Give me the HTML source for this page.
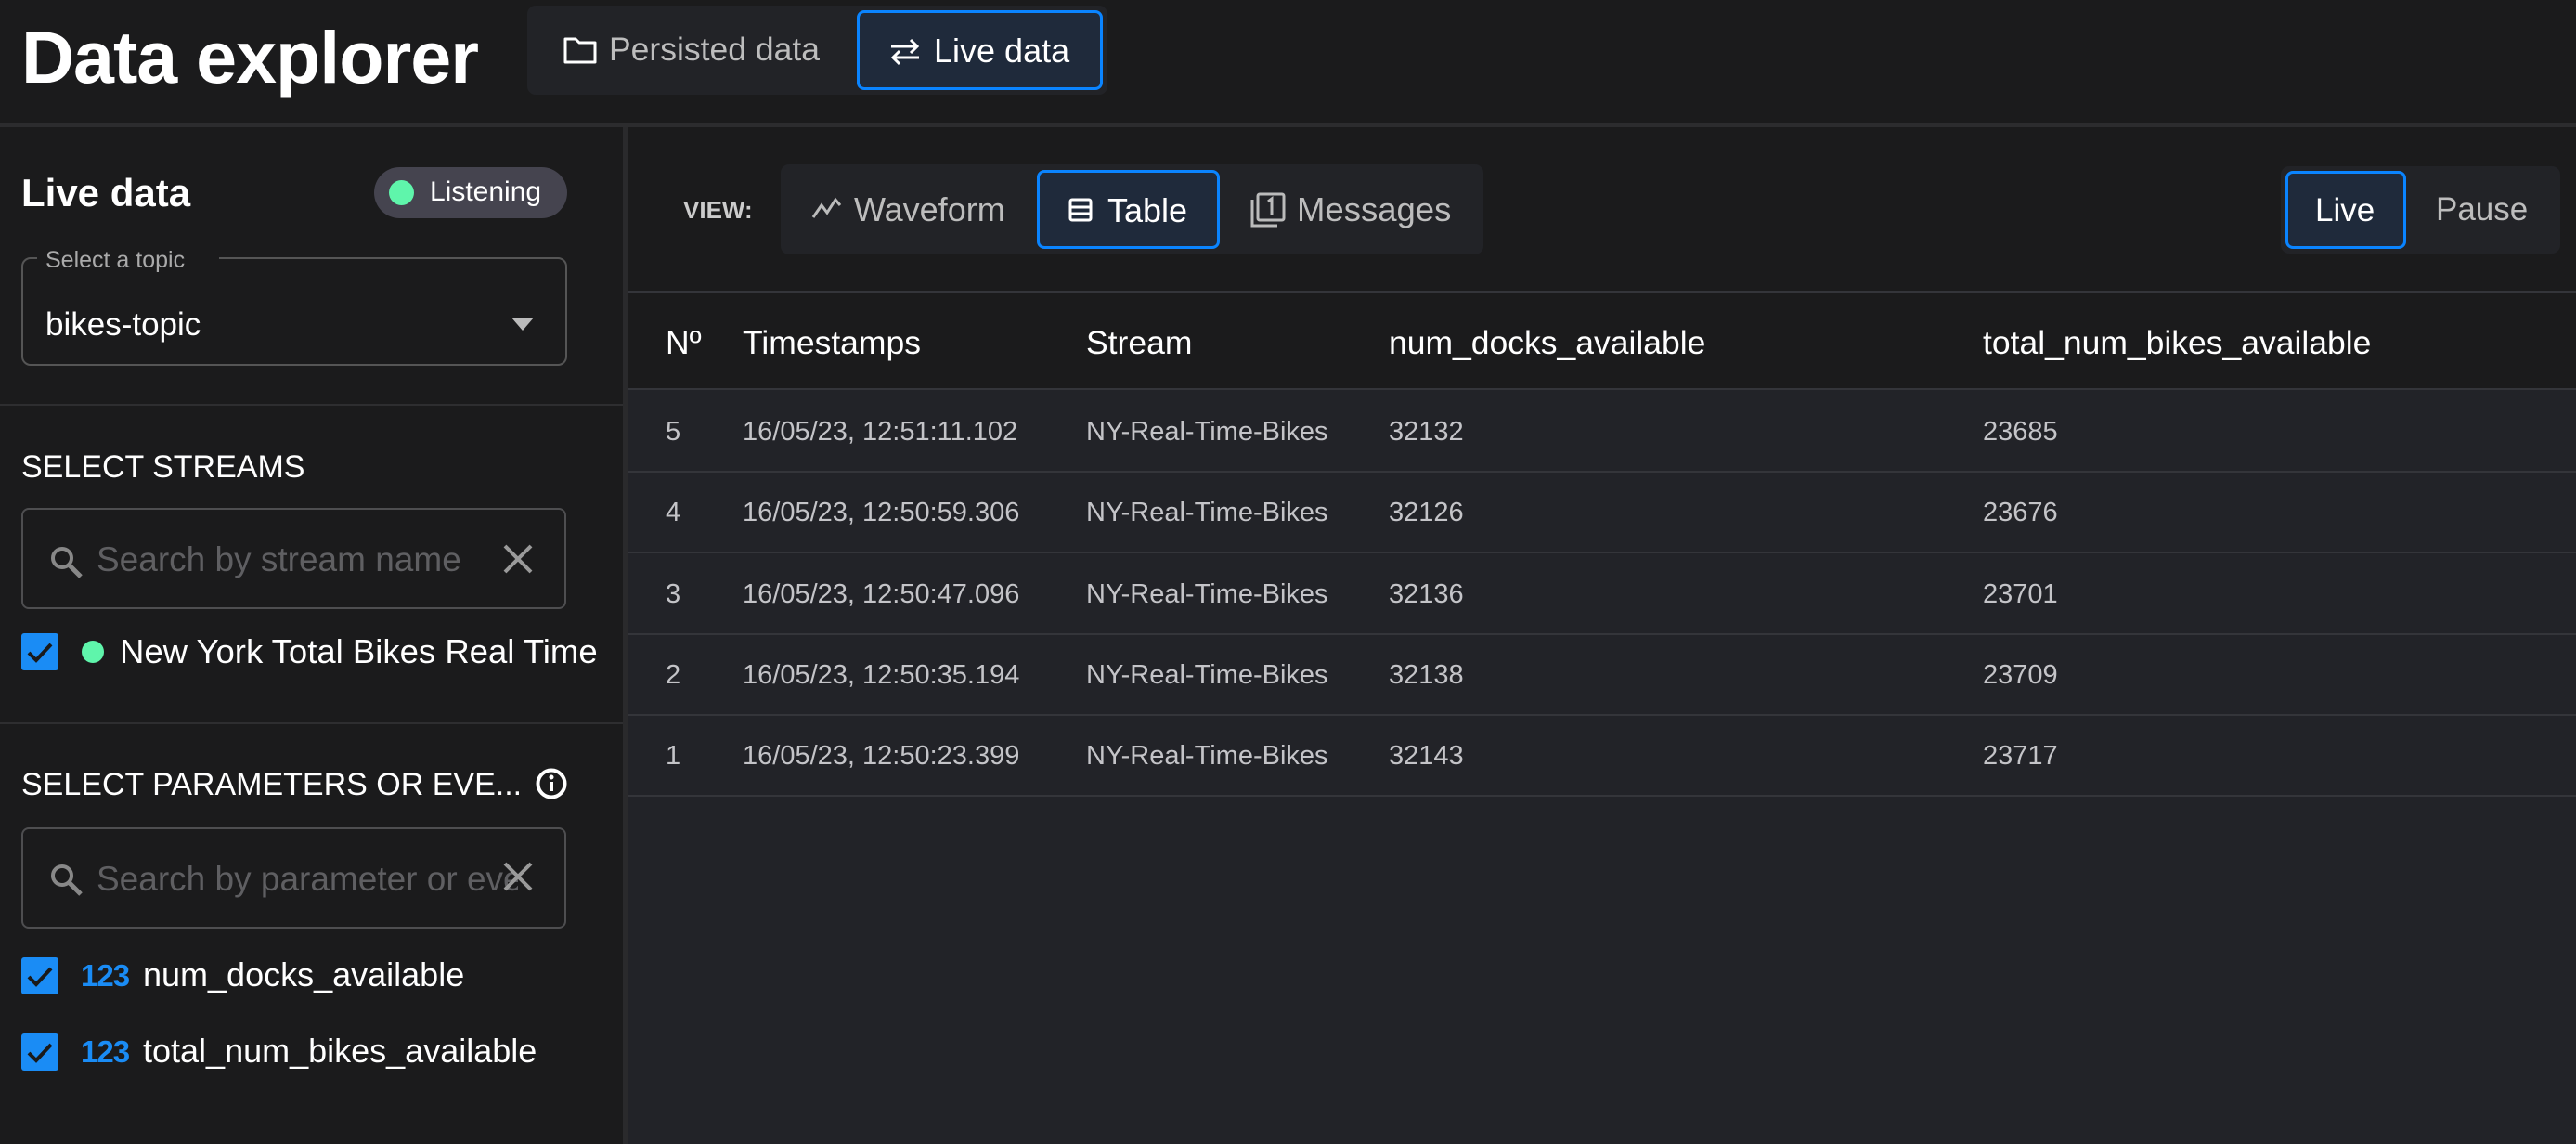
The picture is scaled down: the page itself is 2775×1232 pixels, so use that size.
<!DOCTYPE html>
<html><head><meta charset="utf-8"><style>
*{margin:0;padding:0;box-sizing:border-box}
body{width:2775px;height:1232px;background:#1b1b1c;font-family:"Liberation Sans",sans-serif;color:#fff;position:relative;overflow:hidden}
.a{position:absolute}
.t{position:absolute;white-space:nowrap;line-height:1}
.cb{position:absolute;width:40px;height:40px;background:#1a8cf5;border-radius:3px}
.row{position:absolute;left:676px;right:0;height:2px;background:#34353a}
.cell{position:absolute;white-space:nowrap;font-size:29px;color:#c4c4c8;line-height:1}
.hd{position:absolute;white-space:nowrap;font-size:35.5px;color:#fff;line-height:1;top:352px}
</style></head><body>
<!-- header -->
<div class="t" style="left:23px;top:22px;font-size:79px;font-weight:bold;letter-spacing:-1px">Data explorer</div>
<div class="a" style="left:568px;top:6px;width:625px;height:96px;background:#222327;border-radius:9px"></div>
<svg class="a" style="left:607px;top:39px" width="36" height="30" viewBox="0 0 36 30"><path d="M2 3h11l4 4h17v21H2z" fill="none" stroke="#fff" stroke-width="3" stroke-linejoin="round"/></svg>
<div class="t" style="left:656px;top:36px;font-size:35.5px;color:#bdbdbd">Persisted data</div>
<div class="a" style="left:923px;top:11px;width:265px;height:86px;background:#1f2a3b;border:3px solid #0a84ff;border-radius:8px"></div>
<svg class="a" style="left:958px;top:41px" width="34" height="30" viewBox="0 0 34 30"><path d="M2 9h28M23 2l7 7-7 7M32 21H4M11 14l-7 7 7 7" fill="none" stroke="#fff" stroke-width="3"/></svg>
<div class="t" style="left:1006px;top:37px;font-size:36px;color:#fff">Live data</div>
<div class="a" style="left:0;top:132px;width:2775px;height:5px;background:#2c2c2e"></div>
<!-- sidebar -->
<div class="a" style="left:671px;top:137px;width:5px;height:1095px;background:#2a2a2c"></div>
<div class="t" style="left:23px;top:187px;font-size:42px;font-weight:bold">Live data</div>
<div class="a" style="left:403px;top:180px;width:208px;height:55px;background:#45444f;border-radius:28px"></div>
<div class="a" style="left:419px;top:194px;width:27px;height:27px;background:#5ff5ab;border-radius:50%"></div>
<div class="t" style="left:463px;top:192px;font-size:30px;color:#fff">Listening</div>
<div class="a" style="left:23px;top:277px;width:588px;height:117px;border:2px solid #555;border-radius:10px"></div>
<div class="a" style="left:40px;top:268px;width:196px;height:20px;background:#1b1b1c"></div>
<div class="t" style="left:49px;top:268px;font-size:25px;color:#aaa">Select a topic</div>
<div class="t" style="left:49px;top:332px;font-size:35px;color:#fff">bikes-topic</div>
<svg class="a" style="left:551px;top:342px" width="24" height="14"><path d="M0 0h24L12 14z" fill="#bbb"/></svg>
<div class="a" style="left:0;top:435px;width:671px;height:2px;background:#2e2e30"></div>
<div class="t" style="left:23px;top:486px;font-size:34px;color:#fff">SELECT STREAMS</div>
<div class="a" style="left:23px;top:547px;width:587px;height:109px;border:2px solid #4e4e50;border-radius:8px"></div>
<svg class="a" style="left:54px;top:588px" width="36" height="36" viewBox="0 0 36 36"><circle cx="13" cy="13" r="10" fill="none" stroke="#888" stroke-width="4"/><path d="M20 20l13 13" stroke="#888" stroke-width="5"/></svg>
<div class="t" style="left:104px;top:584px;font-size:37px;color:#5f5f62">Search by stream name</div>
<svg class="a" style="left:541px;top:585px" width="34" height="34"><path d="M3 3l28 28M31 3L3 31" stroke="#9a9a9a" stroke-width="4"/></svg>
<div class="cb" style="left:23px;top:682px"></div>
<svg class="a" style="left:23px;top:682px" width="40" height="40"><path d="M8 21l8 8 16-17" fill="none" stroke="#1a1a1a" stroke-width="4"/></svg>
<div class="a" style="left:88px;top:690px;width:24px;height:24px;background:#5ff5ab;border-radius:50%"></div>
<div class="t" style="left:129px;top:684px;font-size:36.5px;color:#fff">New York Total Bikes Real Time</div>
<div class="a" style="left:0;top:778px;width:671px;height:2px;background:#2e2e30"></div>
<div class="t" style="left:23px;top:828px;font-size:34px;color:#fff">SELECT PARAMETERS OR EVE...</div>
<svg class="a" style="left:577px;top:827px" width="34" height="34"><circle cx="17" cy="17" r="14.5" fill="none" stroke="#fff" stroke-width="4"/><path d="M17 15v10" stroke="#fff" stroke-width="4"/><circle cx="17" cy="10" r="2.5" fill="#fff"/></svg>
<div class="a" style="left:23px;top:891px;width:587px;height:109px;border:2px solid #4e4e50;border-radius:8px;overflow:hidden"></div>
<svg class="a" style="left:54px;top:930px" width="36" height="36" viewBox="0 0 36 36"><circle cx="13" cy="13" r="10" fill="none" stroke="#888" stroke-width="4"/><path d="M20 20l13 13" stroke="#888" stroke-width="5"/></svg>
<div class="a" style="left:104px;top:925px;width:454px;height:48px;overflow:hidden"><div class="t" style="left:0;top:3px;font-size:37px;color:#5f5f62">Search by parameter or events</div></div>
<svg class="a" style="left:541px;top:927px" width="34" height="34"><path d="M3 3l28 28M31 3L3 31" stroke="#9a9a9a" stroke-width="4"/></svg>
<div class="cb" style="left:23px;top:1031px"></div>
<svg class="a" style="left:23px;top:1031px" width="40" height="40"><path d="M8 21l8 8 16-17" fill="none" stroke="#1a1a1a" stroke-width="4"/></svg>
<div class="t" style="left:87px;top:1034px;font-size:33px;font-weight:bold;color:#1a8cf5;letter-spacing:-1px">123</div>
<div class="t" style="left:154px;top:1032px;font-size:36px;color:#fff">num_docks_available</div>
<div class="cb" style="left:23px;top:1113px"></div>
<svg class="a" style="left:23px;top:1113px" width="40" height="40"><path d="M8 21l8 8 16-17" fill="none" stroke="#1a1a1a" stroke-width="4"/></svg>
<div class="t" style="left:87px;top:1116px;font-size:33px;font-weight:bold;color:#1a8cf5;letter-spacing:-1px">123</div>
<div class="t" style="left:154px;top:1114px;font-size:36px;color:#fff">total_num_bikes_available</div>
<!-- main toolbar -->
<div class="t" style="left:736px;top:213px;font-size:26px;color:#ccc;font-weight:bold">VIEW:</div>
<div class="a" style="left:841px;top:177px;width:757px;height:97px;background:#222327;border-radius:9px"></div>
<svg class="a" style="left:874px;top:212px" width="34" height="26"><path d="M2 22l9-13 6 8 9-14 5 6" fill="none" stroke="#bbb" stroke-width="3"/></svg>
<div class="t" style="left:920px;top:208px;font-size:36px;color:#bdbdbd">Waveform</div>
<div class="a" style="left:1117px;top:183px;width:197px;height:85px;background:#1f2a3b;border:3px solid #0a84ff;border-radius:8px"></div>
<svg class="a" style="left:1151px;top:213px" width="26" height="26"><rect x="2" y="2" width="22" height="22" rx="2" fill="none" stroke="#fff" stroke-width="3"/><path d="M2 10h22M2 17h22" stroke="#fff" stroke-width="3"/></svg>
<div class="t" style="left:1193px;top:209px;font-size:36px;color:#fff">Table</div>
<svg class="a" style="left:1346px;top:206px" width="40" height="40"><path d="M3 9v28h27" fill="none" stroke="#bbb" stroke-width="3"/><rect x="9" y="3" width="28" height="28" rx="2" fill="none" stroke="#bbb" stroke-width="3"/><path d="M20 11l4-3v17" fill="none" stroke="#bbb" stroke-width="3"/></svg>
<div class="t" style="left:1397px;top:208px;font-size:36.5px;color:#bdbdbd">Messages</div>
<div class="a" style="left:2457px;top:179px;width:301px;height:94px;background:#222327;border-radius:9px"></div>
<div class="a" style="left:2462px;top:184px;width:130px;height:84px;background:#1f2a3b;border:3px solid #0a84ff;border-radius:8px"></div>
<div class="t" style="left:2494px;top:209px;font-size:35px;color:#fff">Live</div>
<div class="t" style="left:2624px;top:208px;font-size:35px;color:#bdbdbd">Pause</div>
<!-- table -->
<div class="row" style="top:313px;height:3px"></div>
<div class="a" style="left:676px;top:419px;right:0;bottom:0;background:#222328"></div>
<div class="hd" style="left:717px">Nº</div>
<div class="hd" style="left:800px">Timestamps</div>
<div class="hd" style="left:1170px">Stream</div>
<div class="hd" style="left:1496px">num_docks_available</div>
<div class="hd" style="left:2136px">total_num_bikes_available</div>
<div class="row" style="top:418px"></div>
<div class="row" style="top:507px"></div>
<div class="row" style="top:594px"></div>
<div class="row" style="top:682px"></div>
<div class="row" style="top:769px"></div>
<div class="row" style="top:856px"></div>

<div class="cell" style="left:717px;top:451px">5</div><div class="cell" style="left:800px;top:451px">16/05/23, 12:51:11.102</div><div class="cell" style="left:1170px;top:451px">NY-Real-Time-Bikes</div><div class="cell" style="left:1496px;top:451px">32132</div><div class="cell" style="left:2136px;top:451px">23685</div>
<div class="cell" style="left:717px;top:538px">4</div><div class="cell" style="left:800px;top:538px">16/05/23, 12:50:59.306</div><div class="cell" style="left:1170px;top:538px">NY-Real-Time-Bikes</div><div class="cell" style="left:1496px;top:538px">32126</div><div class="cell" style="left:2136px;top:538px">23676</div>
<div class="cell" style="left:717px;top:626px">3</div><div class="cell" style="left:800px;top:626px">16/05/23, 12:50:47.096</div><div class="cell" style="left:1170px;top:626px">NY-Real-Time-Bikes</div><div class="cell" style="left:1496px;top:626px">32136</div><div class="cell" style="left:2136px;top:626px">23701</div>
<div class="cell" style="left:717px;top:713px">2</div><div class="cell" style="left:800px;top:713px">16/05/23, 12:50:35.194</div><div class="cell" style="left:1170px;top:713px">NY-Real-Time-Bikes</div><div class="cell" style="left:1496px;top:713px">32138</div><div class="cell" style="left:2136px;top:713px">23709</div>
<div class="cell" style="left:717px;top:800px">1</div><div class="cell" style="left:800px;top:800px">16/05/23, 12:50:23.399</div><div class="cell" style="left:1170px;top:800px">NY-Real-Time-Bikes</div><div class="cell" style="left:1496px;top:800px">32143</div><div class="cell" style="left:2136px;top:800px">23717</div>
</body></html>
